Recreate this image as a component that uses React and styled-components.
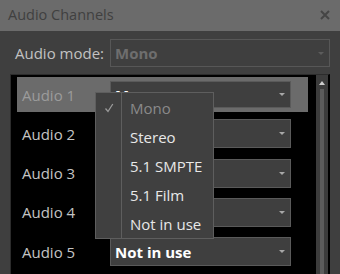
import React from "react";
import styled, { createGlobalStyle } from "styled-components";

const GlobalStyle = createGlobalStyle`
  html, body {
    margin: 0;
    padding: 0;
    background: #3f3f3f;
    overflow: hidden;
  }
  * { box-sizing: border-box; }
`;

const Window = styled.div`
  position: relative;
  width: 340px;
  height: 274px;
  background: #3f3f3f;
  font-family: "Open Sans", "Noto Sans", sans-serif;
  display: flex;
  flex-direction: column;
  overflow: hidden;
`;

const TitleBar = styled.div`
  height: 31px;
  flex: none;
  background: #6b6b6b;
  color: #404040;
  font-size: 14.5px;
  display: flex;
  align-items: center;
  justify-content: space-between;
  padding: 0 8px 2px 8px;
`;

const CloseButton = styled.div`
  width: 12px;
  height: 12px;
  margin-right: 1px;
  display: flex;
`;

const Body = styled.div`
  flex: 1;
  display: flex;
  flex-direction: column;
  padding: 8px 10px 0 10px;
  min-height: 0;
`;

const ModeRow = styled.div`
  display: flex;
  align-items: center;
  height: 28px;
`;

const ModeLabel = styled.div`
  width: 100px;
  padding-left: 5px;
  color: #c2c2c2;
  font-size: 15px;
`;

const Combo = styled.div`
  flex: ${(p) => (p.$wide ? 1 : "none")};
  width: ${(p) => (p.$wide ? "auto" : "181px")};
  height: ${(p) => p.$h || 29}px;
  border: 1px solid ${(p) => (p.$disabled ? "#575757" : "#5a5a5a")};
  background: #3f3f3f;
  color: ${(p) => (p.$disabled ? "#6e6e6e" : "#ffffff")};
  font-weight: 700;
  font-size: 15px;
  display: flex;
  align-items: center;
  justify-content: space-between;
  padding: 0 5px 0 4px;
  overflow: hidden;
  white-space: nowrap;
`;

const Arrow = styled.span`
  width: 0;
  height: 0;
  border-left: 3px solid transparent;
  border-right: 3px solid transparent;
  border-top: 3px solid ${(p) => (p.$disabled ? "#5c5c5c" : "#a8a8a8")};
`;

const ListFrame = styled.div`
  margin-top: 7px;
  flex: 1;
  display: flex;
  background: #000;
  border-left: 1px solid #2c2c2c;
  border-top: 1px solid #2c2c2c;
  border-right: 2px solid #000;
  min-height: 0;
`;

const Rows = styled.div`
  flex: 1;
  display: flex;
  flex-direction: column;
  gap: 4.3px;
  padding: 2px 8px 0 6px;
`;

const Row = styled.div`
  height: 35px;
  flex: none;
  display: flex;
  align-items: center;
  padding-left: 5px;
  background: ${(p) => (p.$selected ? "#6b6b6b" : "transparent")};
`;

const RowLabel = styled.div`
  width: 88px;
  color: ${(p) => (p.$selected ? "#9c9c9c" : "#c4c4c4")};
  font-size: 15px;
`;

const Scrollbar = styled.div`
  width: 12px;
  flex: none;
  background: #3c3c3c;
  display: flex;
  flex-direction: column;
  align-items: center;
  padding-top: 6px;
`;

const UpArrow = styled.span`
  width: 0;
  height: 0;
  border-left: 3.5px solid transparent;
  border-right: 3.5px solid transparent;
  border-bottom: 4px solid #cfcfcf;
`;

const Thumb = styled.div`
  margin-top: 4px;
  width: 4px;
  flex: 1;
  background: #5c5c5c;
`;

const Menu = styled.div`
  position: absolute;
  left: 95px;
  top: 92px;
  width: 119px;
  height: 147px;
  background: #404040;
  border: 1px solid #5e5e5e;
  display: flex;
`;

const Gutter = styled.div`
  width: 26px;
  flex: none;
  border-right: 1px solid #5e5e5e;
  display: flex;
  flex-direction: column;
`;

const CheckCell = styled.div`
  height: 29.4px;
  display: flex;
  align-items: center;
  justify-content: center;
  color: #9a9a9a;
  font-size: 14px;
`;

const MenuItems = styled.div`
  flex: 1;
  display: flex;
  flex-direction: column;
`;

const MenuItem = styled.div`
  height: 29.4px;
  display: flex;
  align-items: center;
  padding-left: 8px;
  font-size: 15px;
  color: ${(p) => (p.$disabled ? "#8a8a8a" : "#e8e8e8")};
`;

const channels = [
  { name: "Audio 1", value: "Mono" },
  { name: "Audio 2", value: "" },
  { name: "Audio 3", value: "" },
  { name: "Audio 4", value: "" },
  { name: "Audio 5", value: "Not in use" },
];

const options = ["Mono", "Stereo", "5.1 SMPTE", "5.1 Film", "Not in use"];

export default function App() {
  return (
    <Window>
      <GlobalStyle />
      <TitleBar>
        <span>Audio Channels</span>
        <CloseButton>
          <svg width="12" height="12" viewBox="0 0 12 12">
            <path d="M2 2 L10 10 M10 2 L2 10" stroke="#454545" strokeWidth="2" />
          </svg>
        </CloseButton>
      </TitleBar>
      <Body>
        <ModeRow>
          <ModeLabel>Audio mode:</ModeLabel>
          <Combo $wide $disabled $h={28}>
            <span>Mono</span>
            <Arrow $disabled />
          </Combo>
        </ModeRow>
        <ListFrame>
          <Rows>
            {channels.map((ch, i) => (
              <Row key={ch.name} $selected={i === 0}>
                <RowLabel $selected={i === 0}>{ch.name}</RowLabel>
                <Combo $h={i === 0 ? 27 : 29}>
                  <span>{ch.value}</span>
                  <Arrow />
                </Combo>
              </Row>
            ))}
          </Rows>
          <Scrollbar>
            <UpArrow />
            <Thumb />
          </Scrollbar>
        </ListFrame>
      </Body>
      <Menu>
        <Gutter>
          <CheckCell>
            <svg width="10" height="10" viewBox="0 0 10 10">
              <path d="M1.5 5.5 L4 8.5 L8.8 1" stroke="#9a9a9a" strokeWidth="1.3" fill="none" />
            </svg>
          </CheckCell>
        </Gutter>
        <MenuItems>
          {options.map((o, i) => (
            <MenuItem key={o} $disabled={i === 0}>
              {o}
            </MenuItem>
          ))}
        </MenuItems>
      </Menu>
    </Window>
  );
}
